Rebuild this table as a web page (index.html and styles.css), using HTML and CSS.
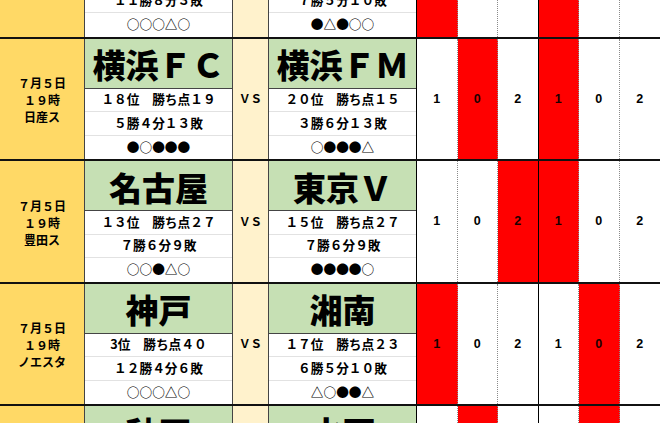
FILE: index.html
```html
<!DOCTYPE html>
<html lang="ja">
<head>
<meta charset="utf-8">
<title>toto 予想</title>
<link rel="stylesheet" href="styles.css">
</head>
<body>
<div class="sheet">

  <div class="match">
    <div class="date"></div>
    <div class="team">
      <div class="name"></div>
      <div class="stat"></div>
      <div class="stat">１１勝８分３敗</div>
      <div class="stat">○○○△○</div>
    </div>
    <div class="vs"></div>
    <div class="team away">
      <div class="name"></div>
      <div class="stat"></div>
      <div class="stat">７勝５分１０敗</div>
      <div class="stat">●△●○○</div>
    </div>
    <div class="picks">
      <div class="pick on"></div><div class="pick"></div><div class="pick"></div>
      <div class="pick on"></div><div class="pick"></div><div class="pick"></div>
    </div>
  </div>

  <div class="match">
    <div class="date"><span>７月５日</span><span>１９時</span><span>日産ス</span></div>
    <div class="team">
      <div class="name">横浜ＦＣ</div>
      <div class="stat">１８位　勝ち点１９</div>
      <div class="stat">５勝４分１３敗</div>
      <div class="stat">●○●●●</div>
    </div>
    <div class="vs">ＶＳ</div>
    <div class="team away">
      <div class="name">横浜ＦＭ</div>
      <div class="stat">２０位　勝ち点１５</div>
      <div class="stat">３勝６分１３敗</div>
      <div class="stat">○●●●△</div>
    </div>
    <div class="picks">
      <div class="pick">1</div><div class="pick on">0</div><div class="pick">2</div>
      <div class="pick on">1</div><div class="pick">0</div><div class="pick">2</div>
    </div>
  </div>

  <div class="match">
    <div class="date"><span>７月５日</span><span>１９時</span><span>豊田ス</span></div>
    <div class="team">
      <div class="name">名古屋</div>
      <div class="stat">１３位　勝ち点２７</div>
      <div class="stat">７勝６分９敗</div>
      <div class="stat">○○●△○</div>
    </div>
    <div class="vs">ＶＳ</div>
    <div class="team away">
      <div class="name">東京Ｖ</div>
      <div class="stat">１５位　勝ち点２７</div>
      <div class="stat">７勝６分９敗</div>
      <div class="stat">●●●●○</div>
    </div>
    <div class="picks">
      <div class="pick">1</div><div class="pick">0</div><div class="pick on">2</div>
      <div class="pick on">1</div><div class="pick">0</div><div class="pick">2</div>
    </div>
  </div>

  <div class="match">
    <div class="date"><span>７月５日</span><span>１９時</span><span>ノエスタ</span></div>
    <div class="team">
      <div class="name">神戸</div>
      <div class="stat">3位　勝ち点４０</div>
      <div class="stat">１２勝４分６敗</div>
      <div class="stat">○○○△○</div>
    </div>
    <div class="vs">ＶＳ</div>
    <div class="team away">
      <div class="name">湘南</div>
      <div class="stat">１７位　勝ち点２３</div>
      <div class="stat">６勝５分１０敗</div>
      <div class="stat">△○●●△</div>
    </div>
    <div class="picks">
      <div class="pick on">1</div><div class="pick">0</div><div class="pick">2</div>
      <div class="pick">1</div><div class="pick on">0</div><div class="pick">2</div>
    </div>
  </div>

  <div class="match">
    <div class="date"></div>
    <div class="team">
      <div class="name">秋田</div>
      <div class="stat"></div>
      <div class="stat"></div>
      <div class="stat"></div>
    </div>
    <div class="vs"></div>
    <div class="team away">
      <div class="name">水戸</div>
      <div class="stat"></div>
      <div class="stat"></div>
      <div class="stat"></div>
    </div>
    <div class="picks">
      <div class="pick"></div><div class="pick on"></div><div class="pick"></div>
      <div class="pick"></div><div class="pick on"></div><div class="pick"></div>
    </div>
  </div>

</div>
</body>
</html>
```

FILE: styles.css
```css
* {
  box-sizing: border-box;
}

html, body {
  margin: 0;
  padding: 0;
  background: #ffffff;
}

body {
  width: 660px;
  height: 423px;
  overflow: hidden;
  font-family: "Noto Sans CJK JP", "Noto Sans", sans-serif;
  color: #000;
}

.sheet {
  margin-top: -84px;
  width: 660px;
}

.match {
  display: grid;
  grid-template-columns: 85px 148px 36px 148px 243px;
  height: 122.5px;
  border-bottom: 2px solid #111;
}

.date {
  background: #ffd966;
  border-right: 1px solid #444;
  display: flex;
  flex-direction: column;
  align-items: center;
  justify-content: center;
  gap: 0;
  text-align: center;
  font-size: 12px;
  font-weight: 700;
  padding-top: 2px;
}

.date span {
  display: block;
  line-height: 17px;
  height: 17px;
}

.team {
  display: grid;
  grid-template-rows: 50px 23.5px 23.5px 1fr;
  border-right: 1px solid #444;
}

.team.away {
  border-right: 1.5px solid #000;
}

.name {
  background: #c6e0b4;
  border-bottom: 1px solid #444;
  display: flex;
  align-items: center;
  justify-content: center;
  font-size: 33px;
  font-weight: 900;
  line-height: 1;
  padding-top: 3px;
  white-space: nowrap;
}

.stat {
  display: flex;
  align-items: center;
  justify-content: center;
  font-size: 12.7px;
  font-weight: 700;
  line-height: 1;
  border-bottom: 1px solid #e2e2e2;
  white-space: nowrap;
}

.stat:last-child {
  border-bottom: none;
}

.vs {
  background: #fff2cc;
  border-right: 1px solid #444;
  display: flex;
  align-items: center;
  justify-content: center;
  font-size: 11.5px;
  font-weight: 700;
  padding-bottom: 1px;
}

.picks {
  display: grid;
  grid-template-columns: repeat(6, 1fr);
}

.pick {
  display: flex;
  align-items: center;
  justify-content: center;
  font-family: "Liberation Sans", Arial, sans-serif;
  font-size: 12.5px;
  font-weight: 700;
  border-right: 1px dotted #8a8a8a;
}

.pick:nth-child(3) {
  border-right: 1.5px solid #000;
}

.pick:nth-child(6) {
  border-right: none;
}

.pick.on {
  background: #ff0000;
  color: #1a0000;
}
```
